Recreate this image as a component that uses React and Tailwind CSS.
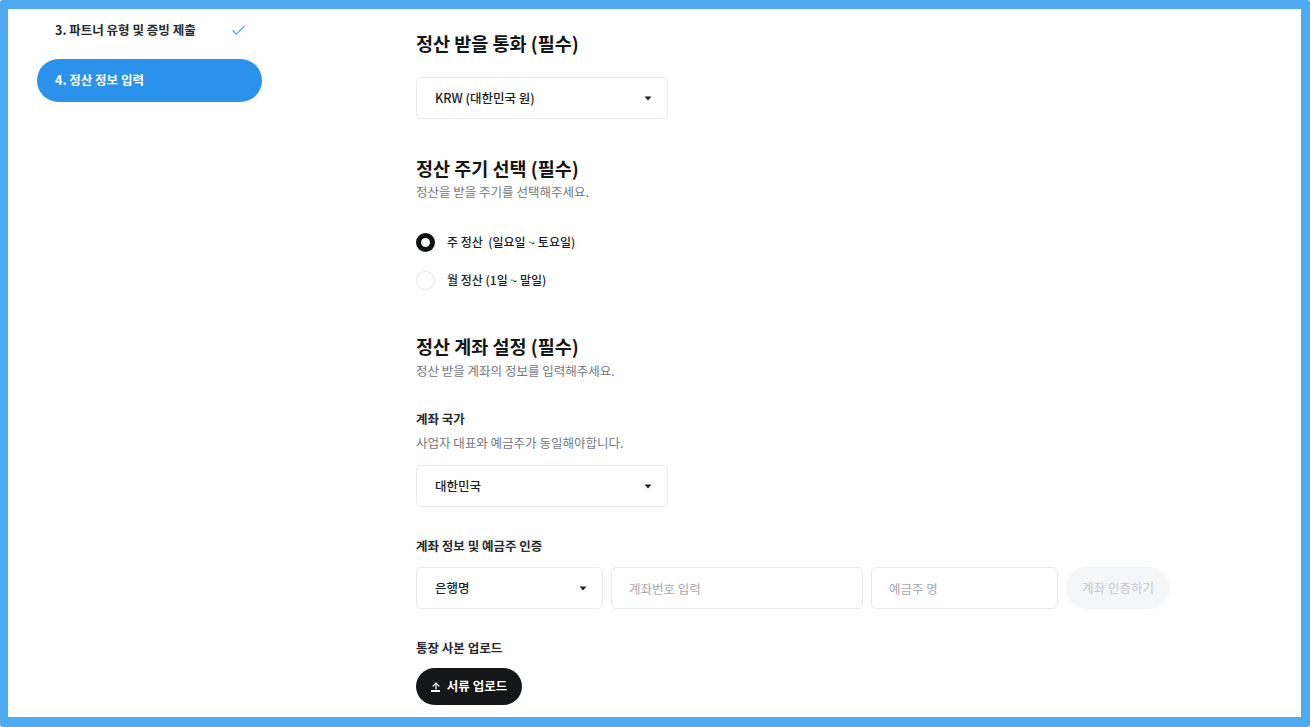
import React, { useState } from "react";
import { Check, ArrowUp } from "lucide-react";

const font = {
  fontFamily: '"Noto Sans CJK KR", "Noto Sans", sans-serif',
};

const Caret = () => (
  <svg width="8" height="5" viewBox="0 0 8 5" className="shrink-0">
    <path d="M0.5 0.5 H7.5 L4 4.5 Z" fill="#1f2328" />
  </svg>
);

const SelectBox = ({ value, className = "" }) => (
  <div
    className={`h-[42px] flex items-center justify-between pl-[18px] pr-[15px] border border-[#e8eaed] rounded-[5px] bg-white text-[12.5px] text-[#1b1d1f] font-medium ${className}`}
  >
    <span>{value}</span>
    <Caret />
  </div>
);

const Radio = ({ checked, label, onClick }) => (
  <button
    type="button"
    onClick={onClick}
    className="h-[24px] flex items-center gap-[12px] text-[12px] font-medium text-[#1b1d1f]"
  >
    <span
      className={`w-[19px] h-[19px] rounded-full ${
        checked ? "border-[5px] border-[#111213]" : "border border-[#e3e5e8]"
      } bg-white`}
    />
    <span className="whitespace-pre">{label}</span>
  </button>
);

export default function App() {
  const [cycle, setCycle] = useState("week");

  return (
    <div
      className="w-[1310px] h-[727px] bg-[#4fa9f1] pt-[9px] pl-[8px] pr-[9px] pb-[10px] rounded-[3px] overflow-hidden"
      style={font}
    >
      <div className="w-full h-full bg-white flex overflow-hidden">
        {/* Sidebar */}
        <div className="w-[254px] shrink-0 pl-[29px] flex flex-col gap-[7px]">
          <div className="w-[225px] h-[43px] flex items-center justify-between pl-[18px] pr-[15px] text-[12.5px] font-bold text-[#26282b]">
            <span>3. 파트너 유형 및 증빙 제출</span>
            <Check size={17} strokeWidth={1.6} className="text-[#4aa3f0]" />
          </div>
          <div className="w-[225px] h-[43px] flex items-center pl-[18px] rounded-full bg-[#2a92eb] text-[12.5px] font-bold text-white">
            4. 정산 정보 입력
          </div>
        </div>

        {/* Main */}
        <div className="ml-[154px] flex flex-col">
          <h2 className="mt-[22px] h-[24px] leading-[24px] text-[18.5px] font-bold text-[#141517]">
            정산 받을 통화 (필수)
          </h2>
          <SelectBox value="KRW (대한민국 원)" className="mt-[22px] w-[252px]" />

          <h2 className="mt-[37px] h-[24px] leading-[24px] text-[18.5px] font-bold text-[#141517]">
            정산 주기 선택 (필수)
          </h2>
          <p className="mt-[2px] h-[20px] leading-[20px] text-[12.5px] text-[#72777d]">
            정산을 받을 주기를 선택해주세요.
          </p>
          <div className="mt-[28px] flex flex-col gap-[14px]">
            <Radio
              checked={cycle === "week"}
              label="주 정산  (일요일 ~ 토요일)"
              onClick={() => setCycle("week")}
            />
            <Radio
              checked={cycle === "month"}
              label="월 정산 (1일 ~ 말일)"
              onClick={() => setCycle("month")}
            />
          </div>

          <h2 className="mt-[42px] h-[24px] leading-[24px] text-[18.5px] font-bold text-[#141517]">
            정산 계좌 설정 (필수)
          </h2>
          <p className="mt-[3px] h-[20px] leading-[20px] text-[12.5px] text-[#72777d]">
            정산 받을 계좌의 정보를 입력해주세요.
          </p>

          <h3 className="mt-[28px] h-[20px] leading-[20px] text-[12.5px] font-bold text-[#26282b]">
            계좌 국가
          </h3>
          <p className="mt-[4px] h-[20px] leading-[20px] text-[12.5px] text-[#72777d]">
            사업자 대표와 예금주가 동일해야합니다.
          </p>
          <SelectBox value="대한민국" className="mt-[12px] w-[252px]" />

          <h3 className="mt-[29px] h-[20px] leading-[20px] text-[12.5px] font-bold text-[#26282b]">
            계좌 정보 및 예금주 인증
          </h3>
          <div className="mt-[11px] flex items-center gap-[8px]">
            <SelectBox value="은행명" className="w-[187px]" />
            <input
              placeholder="계좌번호 입력"
              className="w-[252px] h-[42px] px-[17px] border border-[#e8eaed] rounded-[5px] text-[12.5px] placeholder:text-[#a4a8ad] outline-none"
              style={font}
            />
            <input
              placeholder="예금주 명"
              className="w-[187px] h-[42px] px-[17px] border border-[#e8eaed] rounded-[5px] text-[12.5px] placeholder:text-[#a4a8ad] outline-none"
              style={font}
            />
            <button
              type="button"
              className="w-[104px] h-[42px] rounded-full bg-[#f5f6f7] text-[12.5px] text-[#c3c7cb]"
            >
              계좌 인증하기
            </button>
          </div>

          <h3 className="mt-[29px] h-[20px] leading-[20px] text-[12.5px] font-bold text-[#26282b]">
            통장 사본 업로드
          </h3>
          <button
            type="button"
            className="mt-[10px] w-[106px] h-[37px] rounded-full bg-[#151617] text-white text-[12.5px] font-bold flex items-center justify-center gap-[6px]"
          >
            <span className="flex flex-col items-center">
              <ArrowUp size={10} strokeWidth={3} />
              <span className="w-[9px] h-[2px] bg-white -mt-[1px]" />
            </span>
            서류 업로드
          </button>
        </div>
      </div>
    </div>
  );
}
